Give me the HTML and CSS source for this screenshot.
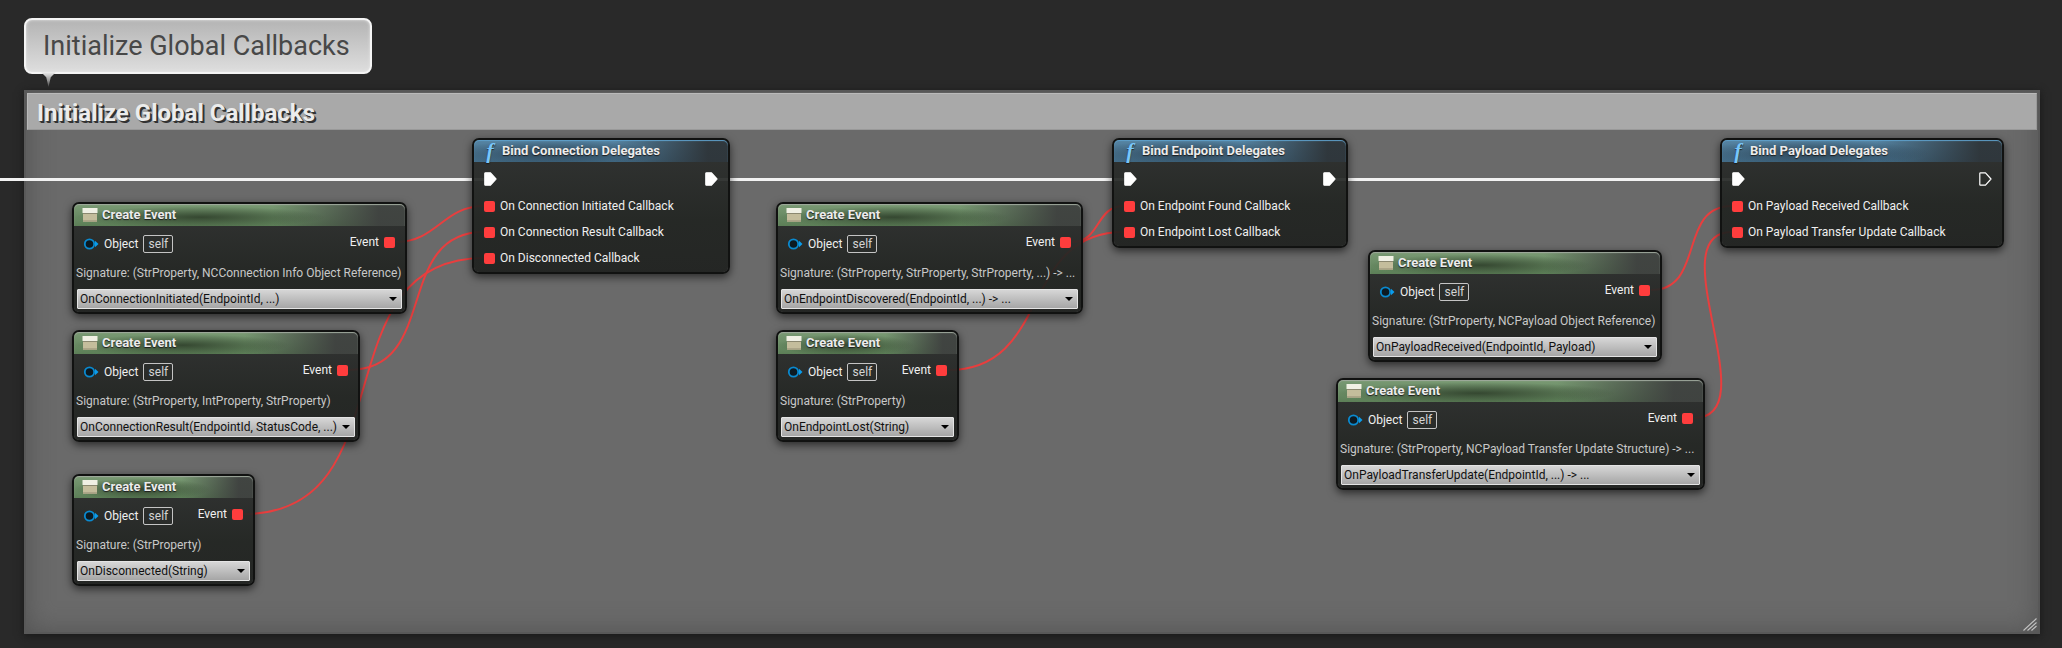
FILE: index.html
```html
<!DOCTYPE html>
<html lang="en">
<head>
<meta charset="utf-8">
<title>Initialize Global Callbacks</title>
<link rel="stylesheet" href="styles.css">
</head>
<body>
<svg class="defs" aria-hidden="true">
  <symbol id="event-icon" viewBox="0 0 16 16">
    <path d="M1 7h14v7.5H1z" fill="#c4bd9c"/>
    <path d="M1 13h14v1.8H1z" fill="#aca588"/>
    <path d="M.5 1h15v5H.5z" fill="#f0f0e4"/>
    <path d="M1 6h14v1H1z" fill="#8b8870"/>
  </symbol>
  <symbol id="object-pin" viewBox="0 0 16 12">
    <circle cx="6.500" cy="6" r="4.700" fill="#0c1a22" stroke="#0a8ad0" stroke-width="1.800"/>
    <path d="M12 2.800 15.500 6 12 9.200z" fill="#0a9cec"/>
  </symbol>
  <symbol id="exec-pin" viewBox="0 0 13 14">
    <path d="M1.500 .8h5L12 7l-5.500 6.200h-5a.7.7 0 0 1-.7-.7v-11a.7.7 0 0 1 .7-.7z" stroke="#fff" stroke-width="1.200" stroke-linejoin="round"/>
  </symbol>
</svg>
<main class="graph">
  <p class="bubble">Initialize Global Callbacks</p>
  <section class="comment">
    <h1 class="comment-title">Initialize Global Callbacks</h1>
    <svg class="grip" viewBox="0 0 14 13" aria-hidden="true"><path d="M.5 12.500 13.500 .5M4.500 12.500l9-8M8.500 12.500l5-4.500" stroke="#c4c4c4" stroke-width="1.100" fill="none"/></svg>
  </section>
  <svg class="wires" aria-hidden="true">
    <g class="exec">
      <path d="M0 179.500H484"/><path d="M718 179.500H1124"/><path d="M1336 179.500H1732"/>
    </g>
    <g class="delegate">
      <path d="M396 242C437 242 443 206 484 206"/>
      <path d="M349 370C440 370 393 232 484 232"/>
      <path d="M244 514C409 514 319 258 484 258"/>
      <path d="M1072 242C1101 242 1095 206 1124 206"/>
      <path d="M948 370C1053 370 1019 232 1124 232"/>
      <path d="M1651 290C1706 290 1677 206 1732 206"/>
      <path d="M1694 418C1769 418 1657 232 1732 232"/>
    </g>
  </svg>

  <article class="node event-node connection-initiated">
    <h2 class="node-title"><svg class="event-icon"><use href="#event-icon"/></svg>Create Event</h2>
    <div class="io"><label class="object"><svg class="object-pin"><use href="#object-pin"/></svg>Object<input class="self" value="self"></label><span class="output">Event<i class="pin"></i></span></div>
    <p class="signature">Signature: (StrProperty, NCConnection Info Object Reference)</p>
    <div class="picker"><select aria-label="Function"><option>OnConnectionInitiated(EndpointId, ...)</option></select></div>
  </article>

  <article class="node event-node connection-result">
    <h2 class="node-title"><svg class="event-icon"><use href="#event-icon"/></svg>Create Event</h2>
    <div class="io"><label class="object"><svg class="object-pin"><use href="#object-pin"/></svg>Object<input class="self" value="self"></label><span class="output">Event<i class="pin"></i></span></div>
    <p class="signature">Signature: (StrProperty, IntProperty, StrProperty)</p>
    <div class="picker"><select aria-label="Function"><option>OnConnectionResult(EndpointId, StatusCode, ...)</option></select></div>
  </article>

  <article class="node event-node disconnected">
    <h2 class="node-title"><svg class="event-icon"><use href="#event-icon"/></svg>Create Event</h2>
    <div class="io"><label class="object"><svg class="object-pin"><use href="#object-pin"/></svg>Object<input class="self" value="self"></label><span class="output">Event<i class="pin"></i></span></div>
    <p class="signature">Signature: (StrProperty)</p>
    <div class="picker"><select aria-label="Function"><option>OnDisconnected(String)</option></select></div>
  </article>

  <article class="node event-node endpoint-discovered">
    <h2 class="node-title"><svg class="event-icon"><use href="#event-icon"/></svg>Create Event</h2>
    <div class="io"><label class="object"><svg class="object-pin"><use href="#object-pin"/></svg>Object<input class="self" value="self"></label><span class="output">Event<i class="pin"></i></span></div>
    <p class="signature">Signature: (StrProperty, StrProperty, StrProperty, ...) -&gt; ...</p>
    <div class="picker"><select aria-label="Function"><option>OnEndpointDiscovered(EndpointId, ...) -&gt; ...</option></select></div>
  </article>

  <article class="node event-node endpoint-lost">
    <h2 class="node-title"><svg class="event-icon"><use href="#event-icon"/></svg>Create Event</h2>
    <div class="io"><label class="object"><svg class="object-pin"><use href="#object-pin"/></svg>Object<input class="self" value="self"></label><span class="output">Event<i class="pin"></i></span></div>
    <p class="signature">Signature: (StrProperty)</p>
    <div class="picker"><select aria-label="Function"><option>OnEndpointLost(String)</option></select></div>
  </article>

  <article class="node event-node payload-received">
    <h2 class="node-title"><svg class="event-icon"><use href="#event-icon"/></svg>Create Event</h2>
    <div class="io"><label class="object"><svg class="object-pin"><use href="#object-pin"/></svg>Object<input class="self" value="self"></label><span class="output">Event<i class="pin"></i></span></div>
    <p class="signature">Signature: (StrProperty, NCPayload Object Reference)</p>
    <div class="picker"><select aria-label="Function"><option>OnPayloadReceived(EndpointId, Payload)</option></select></div>
  </article>

  <article class="node event-node payload-update">
    <h2 class="node-title"><svg class="event-icon"><use href="#event-icon"/></svg>Create Event</h2>
    <div class="io"><label class="object"><svg class="object-pin"><use href="#object-pin"/></svg>Object<input class="self" value="self"></label><span class="output">Event<i class="pin"></i></span></div>
    <p class="signature">Signature: (StrProperty, NCPayload Transfer Update Structure) -&gt; ...</p>
    <div class="picker"><select aria-label="Function"><option>OnPayloadTransferUpdate(EndpointId, ...) -&gt; ...</option></select></div>
  </article>

  <article class="node bind-node bind-connection">
    <h2 class="node-title"><span class="function-icon" aria-hidden="true">f</span>Bind Connection Delegates</h2>
    <div class="exec-row"><svg class="exec-pin linked"><use href="#exec-pin"/></svg><svg class="exec-pin linked"><use href="#exec-pin"/></svg></div>
    <ul class="inputs">
      <li><i class="pin"></i>On Connection Initiated Callback</li>
      <li><i class="pin"></i>On Connection Result Callback</li>
      <li><i class="pin"></i>On Disconnected Callback</li>
    </ul>
  </article>

  <article class="node bind-node bind-endpoint">
    <h2 class="node-title"><span class="function-icon" aria-hidden="true">f</span>Bind Endpoint Delegates</h2>
    <div class="exec-row"><svg class="exec-pin linked"><use href="#exec-pin"/></svg><svg class="exec-pin linked"><use href="#exec-pin"/></svg></div>
    <ul class="inputs">
      <li><i class="pin"></i>On Endpoint Found Callback</li>
      <li><i class="pin"></i>On Endpoint Lost Callback</li>
    </ul>
  </article>

  <article class="node bind-node bind-payload">
    <h2 class="node-title"><span class="function-icon" aria-hidden="true">f</span>Bind Payload Delegates</h2>
    <div class="exec-row"><svg class="exec-pin linked"><use href="#exec-pin"/></svg><svg class="exec-pin"><use href="#exec-pin"/></svg></div>
    <ul class="inputs">
      <li><i class="pin"></i>On Payload Received Callback</li>
      <li><i class="pin"></i>On Payload Transfer Update Callback</li>
    </ul>
  </article>
</main>
</body>
</html>
```
FILE: styles.css
```css
* { box-sizing: border-box; }

body {
  margin: 0;
  background: #292929;
  color: #f0f0f0;
  font: 12px/16px Roboto, "Liberation Sans", sans-serif;
}

h1, h2, p, ul { margin: 0; padding: 0; }
.defs { position: absolute; width: 0; height: 0; }

.graph {
  position: relative;
  display: flex;
  flex-direction: column;
  align-items: flex-start;
  gap: 16px;
  min-height: 100vh;
  padding: 18px 22px 14px 24px;
  overflow: hidden;
}

/* Zoomed-out comment bubble */
.bubble {
  position: relative;
  padding: 10px 20px 10px 17px;
  border: 2px solid #f4f4f4;
  border-radius: 8px;
  background: linear-gradient(#b4b4b4, #dedede);
  box-shadow: inset 0 0 3px #e8e8e8;
  color: #484848;
  font-size: 27px;
  line-height: 32px;
  white-space: nowrap;
}
.bubble::after {
  content: "";
  position: absolute;
  left: 15px;
  top: 100%;
  width: 15px;
  height: 15px;
  background: linear-gradient(#f0f0f0, #4c4c4c);
  clip-path: polygon(0 0, 100% 0, 65% 35%, 50% 100%, 35% 35%);
}

/* Comment region */
.comment {
  position: relative;
  flex: 1;
  align-self: stretch;
  padding: 3px;
  background: #6a6a6a;
  box-shadow: inset 0 0 0 2px #585858, inset 0 0 28px #505050, 0 2px 8px #181818;
}
.comment-title {
  padding: 7px 9px 3px;
  border: 1px solid #999;
  border-top-color: #bababa;
  border-left-color: #bababa;
  background: #a9a9a9;
  color: #ececec;
  font-size: 24px;
  font-weight: 700;
  line-height: 25px;
  text-shadow: 1px 1px 1px #333, 2px 2px 0 #333;
}
.grip { position: absolute; right: 3px; bottom: 3px; width: 14px; height: 13px; }

/* Wires */
.wires { position: absolute; inset: 0; width: 100%; height: 100%; fill: none; }
.exec { stroke: #f2f2f2; stroke-width: 3px; }
.delegate { stroke: #e83e3e; stroke-width: 2px; }

/* Nodes */
.node {
  position: absolute;
  border: 2px solid #111211;
  border-radius: 7px;
  background: linear-gradient(rgba(46, 48, 47, .93), rgba(33, 36, 33, .93) 60%, rgba(31, 33, 31, .93));
  background-clip: padding-box;
  box-shadow: 0 3px 8px rgba(0, 0, 0, .6);
  white-space: nowrap;
}
.node-title {
  display: flex;
  align-items: center;
  gap: 4px;
  height: 22px;
  padding-left: 8px;
  border-radius: 5px 5px 0 0;
  color: #ececec;
  font-size: 13px;
  font-weight: 700;
  line-height: 20px;
  text-shadow: 0 1px 1px #1c1c1c;
}
.event-node .node-title {
  background:
    radial-gradient(ellipse 38% 50% at 38% 60%, rgba(44, 60, 40, .85), transparent),
    linear-gradient(90deg, transparent 60%, rgba(62, 64, 63, .95) 92%),
    linear-gradient(#7a9a74, #5c7f57);
  box-shadow: inset 0 1px 1px #a0aa9e;
}
.bind-node .node-title {
  background:
    radial-gradient(ellipse 42% 60% at 32% 60%, rgba(40, 58, 72, .8), transparent),
    linear-gradient(90deg, transparent 55%, rgba(46, 52, 56, .95) 92%),
    linear-gradient(#5684a3, #426c88);
  box-shadow: inset 0 1px 1px #5f9fc9;
}
.event-icon { width: 16px; height: 16px; }
.function-icon {
  width: 16px;
  color: #78c6fa;
  font: italic 700 22px/20px "Liberation Serif", serif;
  text-align: center;
}

.pin { width: 11px; height: 11px; border-radius: 2px; background: #ff3d3d; }

.io {
  display: flex;
  justify-content: space-between;
  align-items: flex-start;
  padding: 8px 10px 0 9px;
}
.object, .output { display: flex; align-items: center; }
.object { padding-top: 1px; }
.object-pin { width: 16px; height: 12px; margin-right: 5px; }
.self {
  width: 30px;
  height: 18px;
  margin-left: 5px;
  padding: 0;
  border: 1px solid #c4c4c4;
  border-radius: 2px;
  background: transparent;
  color: #d4d4d4;
  font: inherit;
  text-align: center;
}
.output { gap: 5px; }
.signature { padding: 12px 2px 8px; color: #c8c8c8; }

.picker { position: relative; padding: 0 3px 3px; }
.picker select {
  display: block;
  width: 100%;
  height: 20px;
  padding: 0 2px;
  border: 1px solid #e4e4e4;
  border-radius: 1px;
  appearance: none;
  background: linear-gradient(#d6d6d6, #a6a6a6);
  color: #101010;
  font: inherit;
}
.picker::after {
  content: "";
  position: absolute;
  right: 8px;
  top: 8px;
  border: 4px solid transparent;
  border-top-color: #000;
  border-bottom: 0;
  pointer-events: none;
}

.exec-row { display: flex; justify-content: space-between; padding: 10px 10px 7px; }
.exec-pin { width: 13px; height: 14px; fill: none; }
.exec-pin.linked { fill: #fff; }
.inputs { padding-bottom: 1px; list-style: none; }
.inputs li { display: flex; align-items: center; gap: 5px; height: 26px; padding-left: 10px; }

/* Node placement on the canvas */
.connection-initiated { left: 72px; top: 202px; width: 335px; }
.connection-result { left: 72px; top: 330px; width: 288px; }
.disconnected { left: 72px; top: 474px; width: 183px; }
.endpoint-discovered { left: 776px; top: 202px; width: 307px; }
.endpoint-lost { left: 776px; top: 330px; width: 183px; }
.payload-received { left: 1368px; top: 250px; width: 294px; }
.payload-update { left: 1336px; top: 378px; width: 369px; }
.bind-connection { left: 472px; top: 138px; width: 258px; }
.bind-endpoint { left: 1112px; top: 138px; width: 236px; }
.bind-payload { left: 1720px; top: 138px; width: 284px; }
```
